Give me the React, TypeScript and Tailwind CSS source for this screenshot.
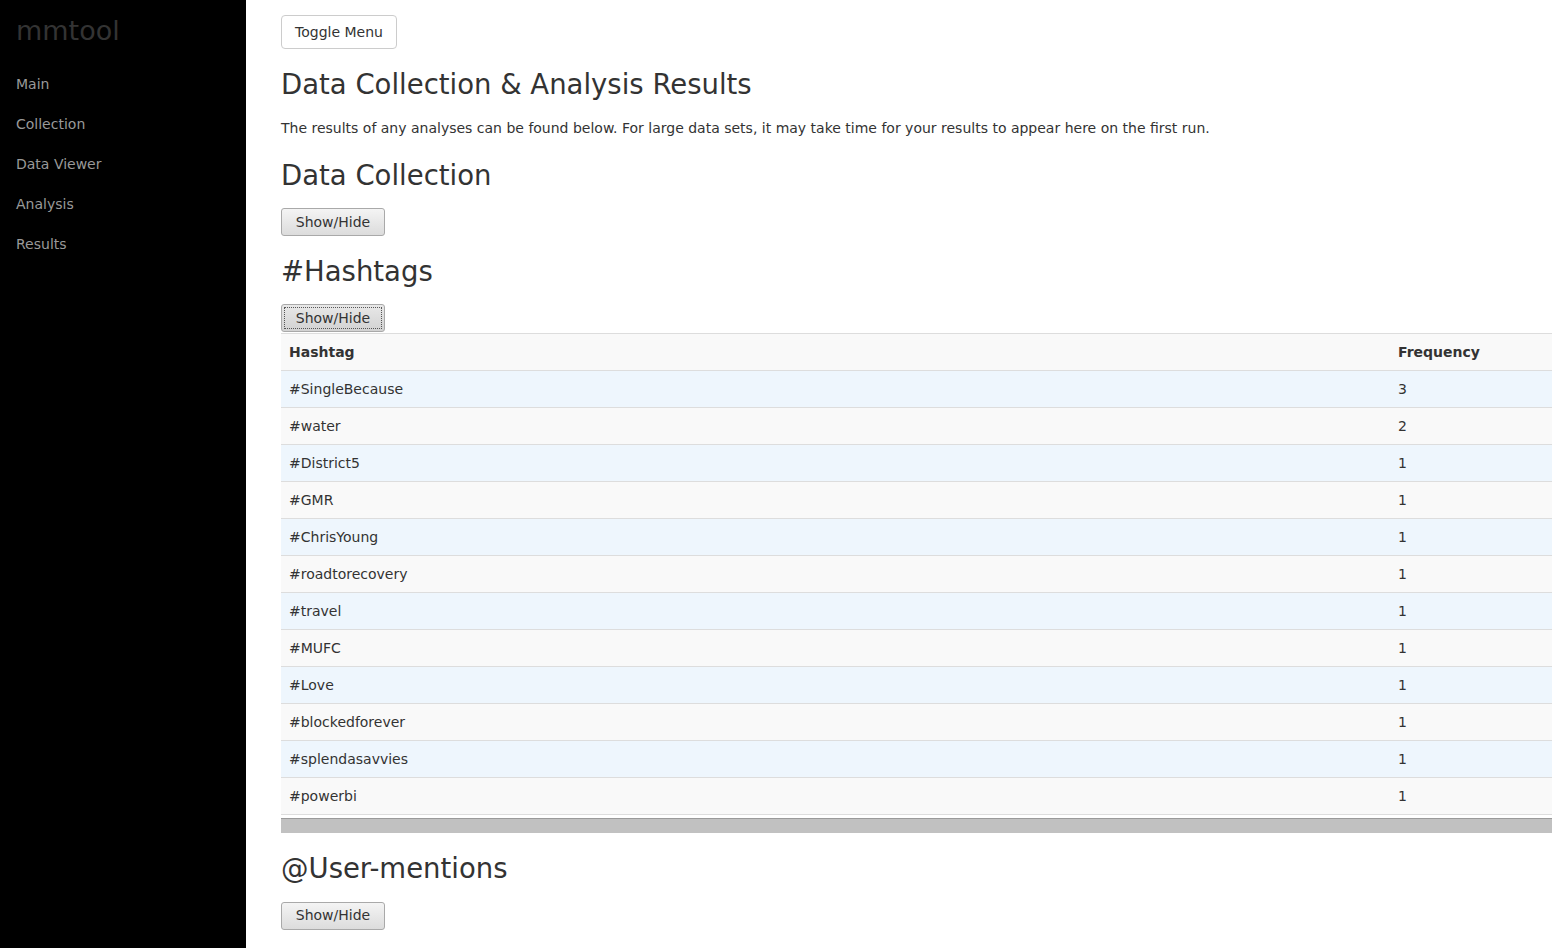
import React from "react";

const navItems = ["Main", "Collection", "Data Viewer", "Analysis", "Results"];

const hashtags: [string, number][] = [
  ["#SingleBecause", 3],
  ["#water", 2],
  ["#District5", 1],
  ["#GMR", 1],
  ["#ChrisYoung", 1],
  ["#roadtorecovery", 1],
  ["#travel", 1],
  ["#MUFC", 1],
  ["#Love", 1],
  ["#blockedforever", 1],
  ["#splendasavvies", 1],
  ["#powerbi", 1],
];

function ShowHide({ focused = false }: { focused?: boolean }) {
  return (
    <button
      type="button"
      className={
        "h-[28px] w-[104px] rounded-[3px] border border-[#a9a9a9] bg-gradient-to-b text-[14px] text-[#333] " +
        (focused ? "from-[#e8e8e8] to-[#d2d2d2] p-[2px]" : "from-[#f4f4f4] to-[#dcdcdc]")
      }
    >
      {focused ? (
        <span className="flex h-full w-full items-center justify-center border border-dotted border-[#555]">
          Show/Hide
        </span>
      ) : (
        "Show/Hide"
      )}
    </button>
  );
}

export default function App() {
  return (
    <div className="flex min-h-[948px] bg-white font-['DejaVu_Sans',sans-serif] text-[#333]">
      <aside className="w-[246px] shrink-0 bg-black">
        <div className="px-[16px] pt-[14px] text-[27px] leading-[34px] text-[#333]">mmtool</div>
        <nav className="mt-[16px] flex flex-col">
          {navItems.map((n) => (
            <a key={n} className="px-[16px] py-[10px] text-[14px] leading-[20px] text-[#999]">
              {n}
            </a>
          ))}
        </nav>
      </aside>

      <main className="min-w-0 flex-1 pl-[35px] pt-[15px]">
        <button
          type="button"
          className="h-[34px] rounded-[4px] border border-[#ccc] bg-white px-[13px] text-[14px] text-[#333]"
        >
          Toggle Menu
        </button>

        <h1 className="mt-[18px] text-[27.5px] leading-[34px]">Data Collection &amp; Analysis Results</h1>
        <p className="mt-[17px] text-[14px] leading-[20px]">
          The results of any analyses can be found below. For large data sets, it may take time for your results to appear here on the first run.
        </p>

        <h2 className="mt-[20px] text-[27.5px] leading-[34px]">Data Collection</h2>
        <div className="mt-[16px]">
          <ShowHide />
        </div>

        <h2 className="mt-[18px] text-[27.5px] leading-[34px]">#Hashtags</h2>
        <div className="mt-[16px]">
          <ShowHide focused />
        </div>

        <div className="mt-[1px]">
          <table className="w-full border-collapse text-[14px]">
            <thead>
              <tr className="h-[37px] border-t border-[#ddd] bg-[#f9f9f9]">
                <th className="px-[8px] text-left font-bold">Hashtag</th>
                <th className="w-[162px] px-[8px] text-left font-bold">Frequency</th>
              </tr>
            </thead>
            <tbody>
              {hashtags.map(([tag, n], i) => (
                <tr
                  key={tag}
                  className={
                    "h-[37px] border-t border-[#ddd] " + (i % 2 === 0 ? "bg-[#eef6fd]" : "bg-[#f9f9f9]")
                  }
                >
                  <td className="px-[8px]">{tag}</td>
                  <td className="px-[8px]">{n}</td>
                </tr>
              ))}
              <tr className="h-[1px] border-t border-[#ddd]"></tr>
            </tbody>
          </table>
          <div className="mt-[2px] h-[15px] border-t border-[#9a9a9a] bg-[#c1c1c1]"></div>
        </div>

        <h2 className="mt-[18px] text-[27.5px] leading-[34px]">@User-mentions</h2>
        <div className="mt-[17px] pb-[19px]">
          <ShowHide />
        </div>
      </main>
    </div>
  );
}
